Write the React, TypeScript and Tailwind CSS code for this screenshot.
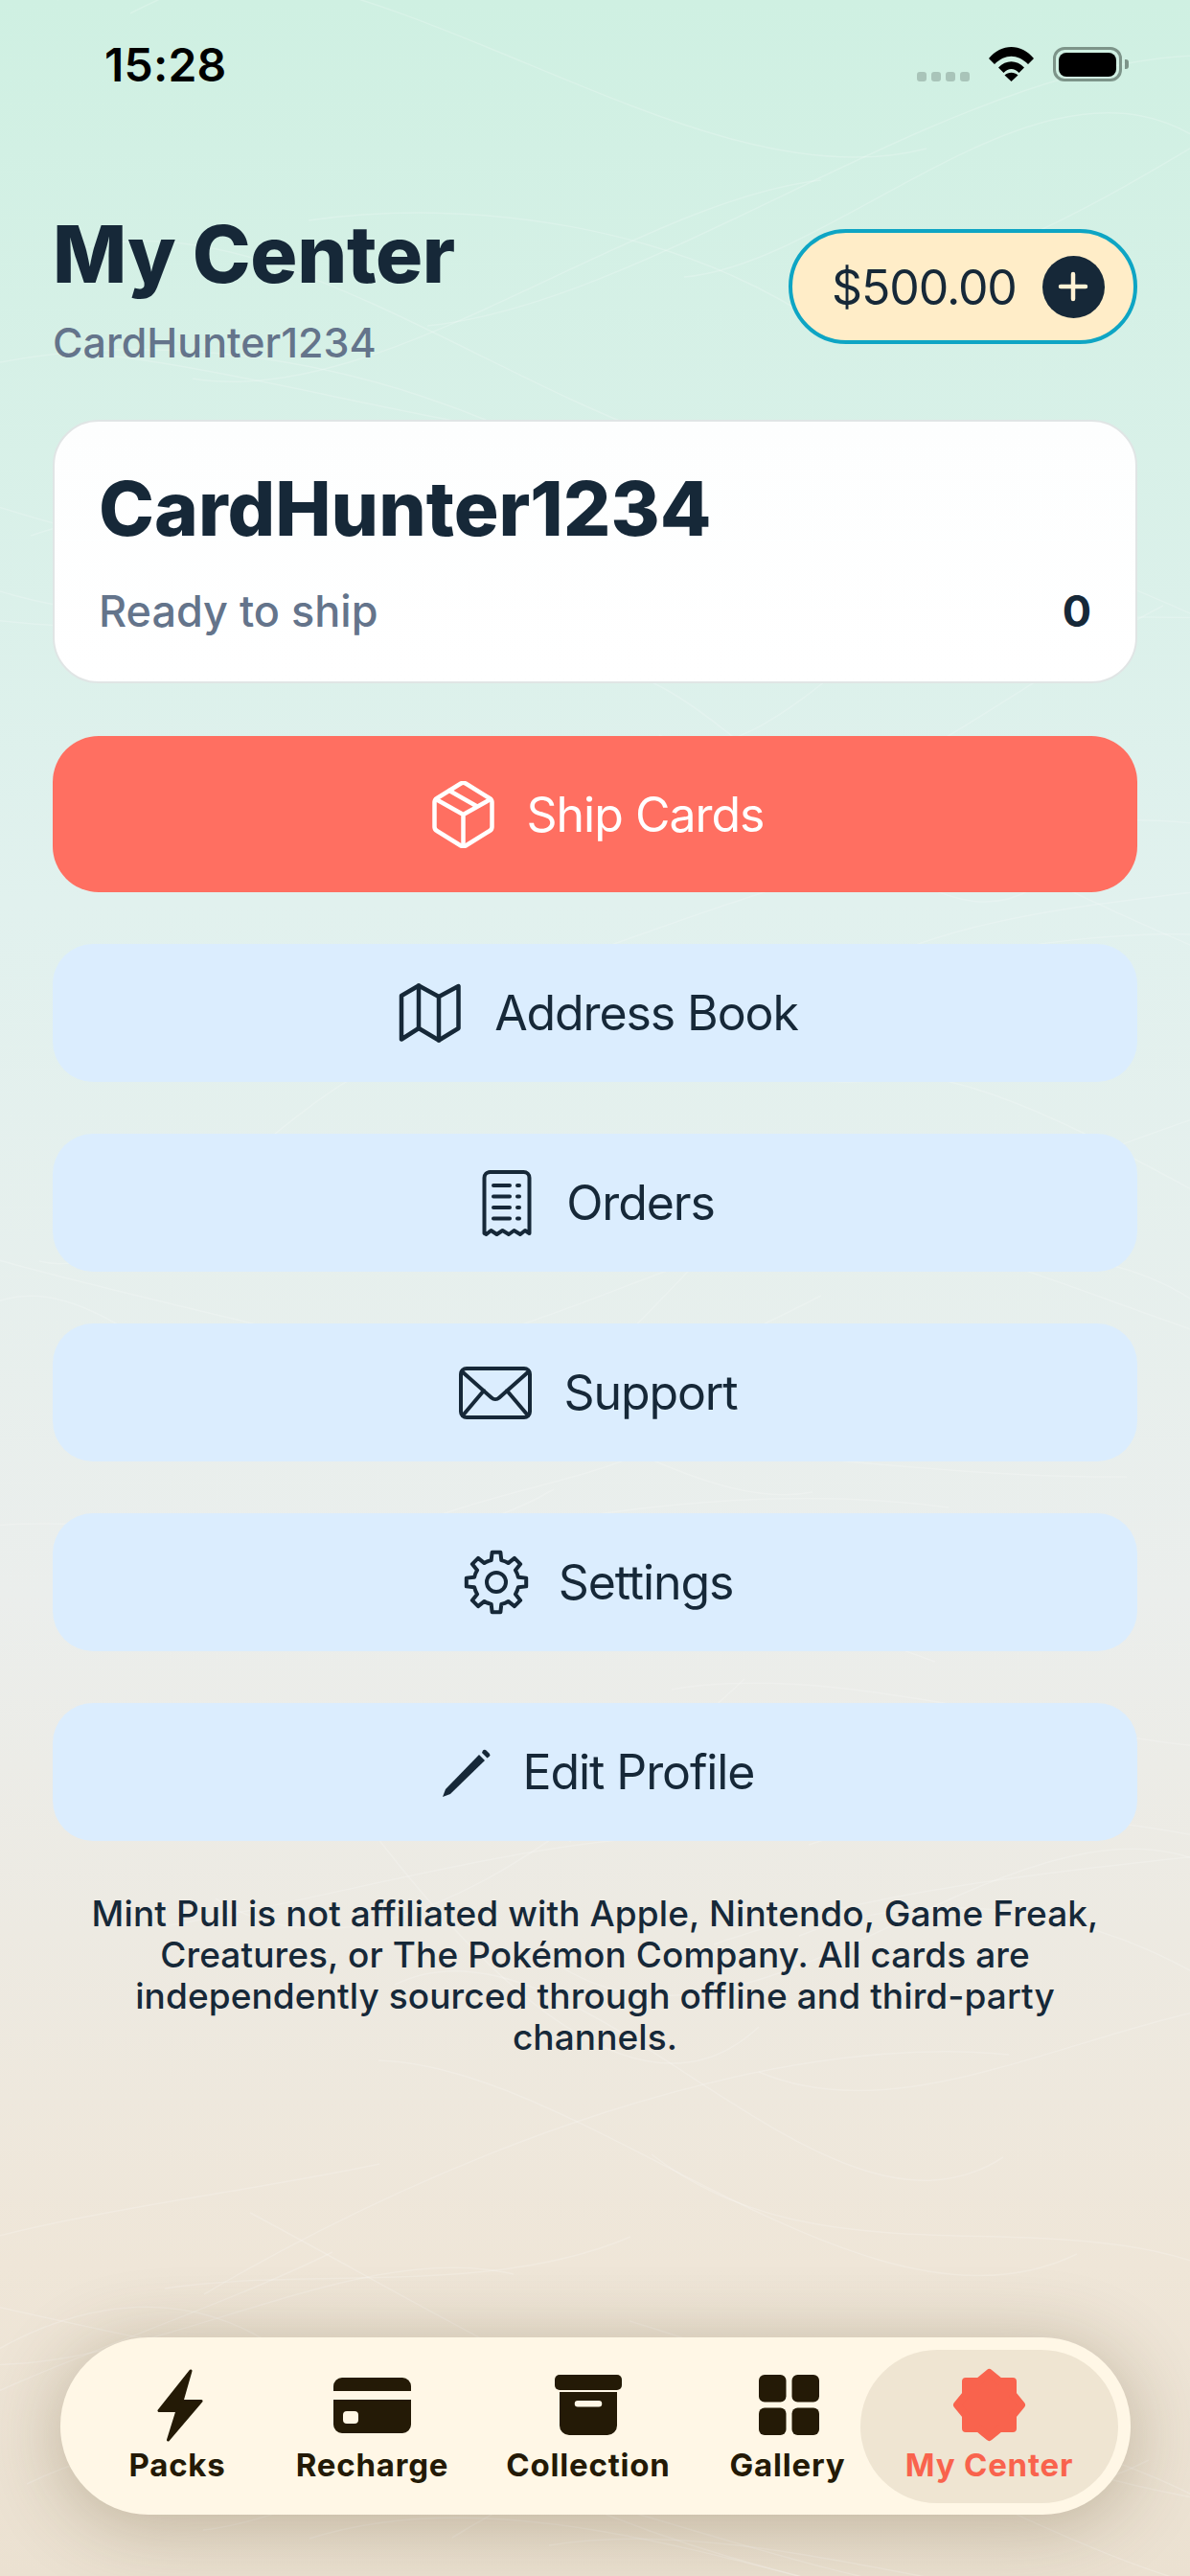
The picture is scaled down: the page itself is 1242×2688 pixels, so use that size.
import type { ReactNode } from 'react';

const INK = '#162838';

// 8 tooth gear outline, same shape as the settings icon
function gearPath() {
  const cx = 34;
  const cy = 34;
  const pt = (r: number, deg: number) => {
    const a = ((deg - 90) * Math.PI) / 180;
    return `${(cx + r * Math.cos(a)).toFixed(2)} ${(cy + r * Math.sin(a)).toFixed(2)}`;
  };
  let d = '';
  for (let i = 0; i < 8; i++) {
    const t = i * 45;
    d += `${i === 0 ? 'M' : 'A24 24 0 0 1'} ${pt(23.5, t - 13)} `;
    d += `L ${pt(31.5, t - 8)} L ${pt(31.5, t + 8)} L ${pt(23.5, t + 13)} `;
  }
  return d + `A24 24 0 0 1 ${pt(23.5, -13)} Z`;
}

function BoxIcon() {
  return (
    <svg width="65" height="70" viewBox="0 0 65 70" fill="none" stroke="#fff" strokeWidth="4.5" strokeLinejoin="round" strokeLinecap="round">
      <path d="M30 2.5a5 5 0 0 1 5 0L60 18a5 5 0 0 1 2.500 4v26a5 5 0 0 1-2.500 4L35 67.500a5 5 0 0 1-5 0L5 52a5 5 0 0 1-2.500-4V22A5 5 0 0 1 5 18Z" />
      <path d="M4 19 32.500 35 61 19M32.500 35v32M18 10l29 16.500" />
    </svg>
  );
}

function MapIcon() {
  return (
    <svg width="65" height="62" viewBox="0 0 65 62" fill="none" stroke={INK} strokeWidth="4.500" strokeLinejoin="round" strokeLinecap="round">
      <path d="M3 13 21 2.500 42 14 62.500 3v44L42 59.500 21 47 3 58.500Z" />
      <path d="M21 2.500V47M42 14v45.500" />
    </svg>
  );
}

function ReceiptIcon() {
  return (
    <svg width="52" height="69" viewBox="0 0 52 69" fill="none" stroke={INK} strokeWidth="4" strokeLinejoin="round" strokeLinecap="round">
      <path d="M2.500 66V8a6 6 0 0 1 6-6h35a6 6 0 0 1 6 6v58l-4.500-3-5 4-6.500-4-5.500 4-6.500-4-6 4-6-4-5 4Z" />
      <path d="M12 16h17M12 27.500h17M12 39h17M12 50.500h17M37 16h2M37 27.500h2M37 39h2M37 50.500h2" />
    </svg>
  );
}

function MailIcon() {
  return (
    <svg width="76" height="55" viewBox="0 0 76 55" fill="none" stroke={INK} strokeWidth="4" strokeLinejoin="round" strokeLinecap="round">
      <rect x="2" y="2" width="72" height="51" rx="6" />
      <path d="M3 5 34 32.500a6 6 0 0 0 8 0L73 5M26 25 4 51M50 25l22 26" />
    </svg>
  );
}

function GearIcon() {
  return (
    <svg width="68" height="68" viewBox="0 0 68 68" fill="none" stroke={INK} strokeWidth="4" strokeLinejoin="round">
      <path d={gearPath()} />
      <circle cx="34" cy="34" r="10" />
    </svg>
  );
}

function PencilIcon() {
  return (
    <svg width="51" height="51" viewBox="0 0 51 51" fill={INK}>
      <path d="M0 51 3 43 38 7 44 13 8 48Z" />
      <path d="M42 2.500a2.500 2.500 0 0 1 3.500 0l3 3a2.500 2.500 0 0 1 0 3.500L46.500 10.500 41 5Z" />
    </svg>
  );
}

const NAV_INK = '#241a06';

function BoltIcon() {
  return (
    <svg className="ml-[5px]" width="48" height="76" viewBox="0 0 48 76" fill={NAV_INK} stroke={NAV_INK} strokeWidth="3" strokeLinejoin="round">
      <path d="M35 2 2 43.500H21L11.500 74 46 33.500H26Z" />
    </svg>
  );
}

function CardIcon() {
  return (
    <svg width="81" height="58" viewBox="0 0 81 58" fill={NAV_INK}>
      <path d="M0 14V9a9 9 0 0 1 9-9h63a9 9 0 0 1 9 9v5Z" />
      <path fillRule="evenodd" d="M0 23h81v26a9 9 0 0 1-9 9H9a9 9 0 0 1-9-9ZM14 35a4 4 0 0 0-4 4v5a4 4 0 0 0 4 4h8a4 4 0 0 0 4-4v-5a4 4 0 0 0-4-4Z" />
    </svg>
  );
}

function ArchiveIcon() {
  return (
    <svg width="70" height="63" viewBox="0 0 70 63" fill={NAV_INK}>
      <rect x="0" y="0" width="70" height="16" rx="5" />
      <path fillRule="evenodd" d="M5 18h60v35a10 10 0 0 1-10 10H15A10 10 0 0 1 5 53ZM24 27a3 3 0 0 0 0 6.500h22a3 3 0 0 0 0-6.500Z" />
    </svg>
  );
}

function GridIcon() {
  return (
    <svg className="ml-[3px]" width="63" height="63" viewBox="0 0 63 63" fill={NAV_INK}>
      <rect x="0" y="0" width="28.500" height="28.500" rx="6" />
      <rect x="34.500" y="0" width="28.500" height="28.500" rx="6" />
      <rect x="0" y="34.500" width="28.500" height="28.500" rx="6" />
      <rect x="34.500" y="34.500" width="28.500" height="28.500" rx="6" />
    </svg>
  );
}

function BadgeIcon() {
  return (
    <svg width="77" height="77" viewBox="0 0 77 77" fill="#f9634d" stroke="#f9634d" strokeWidth="8" strokeLinejoin="round">
      <path d="M38.500 5 49.500 14H63V27.500L72 38.500 63 49.500V63H49.500L38.500 72 27.500 63H14V49.500L5 38.500 14 27.500V14H27.500Z" />
    </svg>
  );
}

function MenuButton({ icon, label, gap }: { icon: ReactNode; label: string; gap: string }) {
  return (
    <button className={`flex h-[144px] w-full items-center justify-center rounded-[42px] bg-[#dbedfe] pl-[7px] text-[50px] leading-none tracking-[-1.1px] text-[#162838] ${gap}`}>
      {icon}
      <span>{label}</span>
    </button>
  );
}

function NavItem({ icon, label, width, active }: { icon: ReactNode; label: string; width: string; active?: boolean }) {
  return (
    <div className={`flex h-[160px] flex-col items-center ${width} ${active ? 'rounded-[80px] bg-[#efe5d2] text-[#f9634d]' : 'text-[#241a06]'}`}>
      <div className="mt-[19px] flex h-[78px] items-center justify-center">{icon}</div>
      <span className="mt-[3px] text-[33px] leading-[40px] font-bold tracking-[0.8px]">{label}</span>
    </div>
  );
}

// faint crossing strands over the background, seeded so every render is the same
function strands() {
  let seed = 17;
  const rnd = (min: number, max: number) => {
    seed = (seed * 16807) % 2147483647;
    return min + (seed / 2147483647) * (max - min);
  };
  const out: string[] = [];
  for (let i = 0; i < 70; i++) {
    const y = rnd(0, 2688);
    const x = rnd(-200, 900);
    const len = rnd(400, 1000);
    const y2 = y + rnd(-260, 260);
    out.push(`M${x.toFixed(0)} ${y.toFixed(0)}C${(x + len * 0.3).toFixed(0)} ${(y + rnd(-160, 160)).toFixed(0)} ${(x + len * 0.7).toFixed(0)} ${(y2 + rnd(-160, 160)).toFixed(0)} ${(x + len).toFixed(0)} ${y2.toFixed(0)}`);
  }
  return out;
}

function Texture() {
  return (
    <svg className="absolute inset-0" width="1242" height="2688" viewBox="0 0 1242 2688" fill="none" stroke="#ffffff" strokeOpacity="0.2" strokeWidth="1.5">
      {strands().map((d, i) => (
        <path key={i} d={d} />
      ))}
    </svg>
  );
}

export default function App() {
  return (
    <div className="relative flex h-[2688px] w-[1242px] flex-col overflow-hidden bg-[linear-gradient(180deg,#cff0e2_0%,#e1f1ee_35%,#ebeeec_62%,#efe6d8_88%,#ebe1d1_100%)] font-[Inter,sans-serif] text-[#162838]">
      <Texture />

      <div className="relative flex h-[224px] flex-col px-[55px]">
        <div className="flex items-start justify-between pt-[49px]">
          <span className="ml-[54px] text-[48px] leading-[38px] font-semibold tracking-[0.2px] text-black">15:28</span>
          <div className="flex items-end pr-[9px]">
            <div className="flex gap-[5px]">
              <div className="h-[10px] w-[10px] rounded-[3px] bg-[#a9c4b9]" />
              <div className="h-[10px] w-[10px] rounded-[3px] bg-[#a9c4b9]" />
              <div className="h-[10px] w-[10px] rounded-[3px] bg-[#a9c4b9]" />
              <div className="h-[10px] w-[10px] rounded-[3px] bg-[#a9c4b9]" />
            </div>
            <svg className="ml-[20px]" width="47" height="36" viewBox="0 0 47 36">
              <path d="M0 12C13-4 34-4 47 12L41 18C30 7 17 7 6 18Z" />
              <path d="M10 21.500C18 13 29 13 37 21.500L31.500 27C26.500 21.500 20.500 21.500 15.500 27Z" />
              <path d="M23.500 36 16.500 29.500C20.500 25.800 26.500 25.800 30.500 29.500Z" />
            </svg>
            <div className="ml-[20px] flex items-center">
              <div className="flex h-[36px] w-[72px] items-center justify-center rounded-[12px] border-[3px] border-[#7d9489]">
                <div className="h-[25px] w-[60px] rounded-[8px] bg-black" />
              </div>
              <div className="ml-[3px] h-[10px] w-[4px] rounded-r-[3px] bg-[#7d9489]" />
            </div>
          </div>
        </div>
      </div>

      <div className="relative flex flex-col px-[55px]">
        <div className="flex items-start justify-between">
          <div className="flex flex-col">
            <h1 className="text-[82px] leading-[84px] font-extrabold tracking-[-0.4px]">My Center</h1>
            <p className="mt-[28px] text-[43px] leading-[42px] font-medium text-[#64748b]">CardHunter1234</p>
          </div>
          <div className="mt-[15px] flex h-[120px] w-[364px] items-center rounded-[60px] border-[4px] border-[#0ea5c4] bg-[#ffedc8] pl-[41px]">
            <span className="mt-[2px] text-[50px] leading-none tracking-[-1.1px]">$500.00</span>
            <div className="ml-[27px] flex h-[65px] w-[65px] items-center justify-center rounded-full bg-[#162838]">
              <svg width="32" height="32" viewBox="0 0 32 32" stroke="#fff2d4" strokeWidth="4.500" strokeLinecap="round">
                <path d="M16 3v26M3 16h26" />
              </svg>
            </div>
          </div>
        </div>

        <div className="mt-[60px] flex h-[275px] flex-col rounded-[48px] border-2 border-[#e0e5e5] bg-[linear-gradient(180deg,#fdfefe,#ffffff)] px-[46px]">
          <div className="mt-[49px] text-[78px] leading-[84px] font-extrabold">CardHunter1234</div>
          <div className="mt-[40px] flex items-center justify-between">
            <span className="text-[45px] leading-[50px] font-medium text-[#64748b]">Ready to ship</span>
            <span className="text-[45px] leading-[50px] font-bold">0</span>
          </div>
        </div>

        <button className="mt-[55px] flex h-[163px] items-center justify-center gap-[33px] rounded-[48px] bg-[#ff6f61] pl-[7px] text-[50px] leading-none tracking-[-1px] text-white">
          <BoxIcon />
          <span>Ship Cards</span>
        </button>

        <div className="mt-[54px] flex flex-col gap-[54px]">
          <MenuButton icon={<MapIcon />} label="Address Book" gap="gap-[35px]" />
          <MenuButton icon={<ReceiptIcon />} label="Orders" gap="gap-[36px]" />
          <MenuButton icon={<MailIcon />} label="Support" gap="gap-[33px]" />
          <MenuButton icon={<GearIcon />} label="Settings" gap="gap-[31px]" />
          <MenuButton icon={<PencilIcon />} label="Edit Profile" gap="gap-[33px]" />
        </div>

        <p className="mt-[54px] text-center text-[37px] leading-[43px] font-medium tracking-[0.1px]">
          Mint Pull is not affiliated with Apple, Nintendo, Game Freak,
          <br />
          Creatures, or The Pokémon Company. All cards are
          <br />
          independently sourced through offline and third-party
          <br />
          channels.
        </p>
      </div>

      <nav className="relative mt-auto mb-[64px] ml-[63px] flex h-[185px] w-[1117px] items-center rounded-[92px] bg-[#fff7e6] pl-[12px] shadow-[0_10px_80px_rgba(80,60,20,0.3)]">
        <NavItem icon={<BoltIcon />} label="Packs" width="w-[220px]" />
        <NavItem icon={<CardIcon />} label="Recharge" width="w-[187px]" />
        <NavItem icon={<ArchiveIcon />} label="Collection" width="w-[264px]" />
        <NavItem icon={<GridIcon />} label="Gallery" width="w-[152px]" />
        <NavItem icon={<BadgeIcon />} label="My Center" width="w-[269px]" active />
      </nav>
    </div>
  );
}
